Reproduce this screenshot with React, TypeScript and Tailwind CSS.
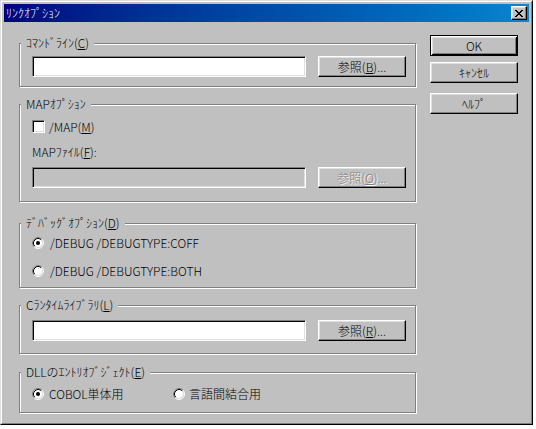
import type { ReactNode } from "react";

const raised =
  "border border-t-white border-l-white border-r-black border-b-black shadow-[inset_-1px_-1px_#808080,inset_1px_1px_#dfdfdf]";
const sunken =
  "border border-t-[#808080] border-l-[#808080] border-r-white border-b-white shadow-[inset_1px_1px_#000,inset_-1px_-1px_#dfdfdf]";

function Radio({ checked }: { checked?: boolean }) {
  return (
    <svg width="12" height="12" viewBox="0 0 12 12" className="shrink-0">
      <circle cx="6" cy="6" r="4.5" fill="#fff" />
      <path d="M2.11 9.89 A5.5 5.5 0 0 1 9.89 2.11" fill="none" stroke="#808080" />
      <path d="M9.89 2.11 A5.5 5.5 0 0 1 2.11 9.89" fill="none" stroke="#fff" />
      <path d="M2.82 9.18 A4.5 4.5 0 0 1 9.18 2.82" fill="none" stroke="#000" />
      <path d="M9.18 2.82 A4.5 4.5 0 0 1 2.82 9.18" fill="none" stroke="#dfdfdf" />
      {checked && <circle cx="6" cy="6" r="2" fill="#000" />}
    </svg>
  );
}

function Button({
  children,
  primary,
  disabled,
}: {
  children: ReactNode;
  primary?: boolean;
  disabled?: boolean;
}) {
  const frame = primary
    ? "border border-black shadow-[inset_1px_1px_#fff,inset_-1px_-1px_#000,inset_2px_2px_#dfdfdf,inset_-2px_-2px_#808080]"
    : raised;
  return (
    <div
      className={`flex h-[21px] w-[88px] shrink-0 items-center justify-center ${frame} ${
        disabled ? "text-[#808080] [text-shadow:1px_1px_0_#fff]" : "text-black"
      }`}
    >
      {children}
    </div>
  );
}

function Group({ label, className, children }: { label: ReactNode; className: string; children: ReactNode }) {
  return (
    <div className={`relative border border-[#808080] pl-[12px] shadow-[inset_1px_1px_#fff,1px_1px_#fff] ${className}`}>
      <span className="absolute -top-[8px] left-[1px] bg-[#c0c0c0] px-[5px] leading-[14px]">{label}</span>
      {children}
    </div>
  );
}

function PathRow({ disabled, label }: { disabled?: boolean; label: ReactNode }) {
  return (
    <div className="flex items-center">
      <div className={`h-[21px] w-[274px] ${sunken} ${disabled ? "bg-[#c0c0c0]" : "bg-white"}`} />
      <div className="ml-[12px]">
        <Button disabled={disabled}>{label}</Button>
      </div>
    </div>
  );
}

const U = ({ children }: { children: ReactNode }) => <span className="underline underline-offset-1">{children}</span>;

export default function App() {
  return (
    <div className="h-[429px] w-[536px] bg-white font-['Noto_Sans_CJK_JP',sans-serif] text-[12px] leading-[14px] font-light text-black">
      <div className="h-[425px] w-[533px] border border-t-[#dfdfdf] border-l-[#dfdfdf] border-r-black border-b-black">
        <div className="flex h-full flex-col border border-t-white border-l-white border-r-[#808080] border-b-[#808080] bg-[#c0c0c0] p-[2px]">
          <div className="flex h-[18px] shrink-0 items-center justify-between bg-linear-to-r from-[#000080] to-[#1084d0] pl-[2px] pr-[2px]">
            <span className="text-white">ﾘﾝｸｵﾌﾟｼｮﾝ</span>
            <div className={`flex h-[14px] w-[16px] items-center justify-center bg-[#c0c0c0] ${raised}`}>
              <svg width="8" height="7" viewBox="0 0 8 7" shapeRendering="crispEdges">
                <path
                  d="M0 0h2v1H0zM6 0h2v1H6zM1 1h2v1H1zM5 1h2v1H5zM2 2h4v1H2zM3 3h2v1H3zM2 4h4v1H2zM1 5h2v1H1zM5 5h2v1H5zM0 6h2v1H0zM6 6h2v1H6z"
                  fill="#000"
                />
              </svg>
            </div>
          </div>

          <div className="flex pl-[15px]">
            <div className="flex w-[397px] flex-col pt-[21px]">
              <Group label={<>ｺﾏﾝﾄﾞﾗｲﾝ(<U>C</U>)</>} className="pt-[12px] pb-[9px]">
                <PathRow label={<>参照(<U>B</U>)...</>} />
              </Group>

              <Group label="MAPｵﾌﾟｼｮﾝ" className="mt-[17px] pt-[15px] pb-[13px]">
                <div className="flex h-[13px] items-center">
                  <div className={`h-[13px] w-[13px] bg-white ${sunken}`} />
                  <span className="ml-[4px]">
                    /MAP(<U>M</U>)
                  </span>
                </div>
                <div className="mt-[12px] h-[14px]">
                  MAPﾌｧｲﾙ(<U>F</U>):
                </div>
                <div className="mt-[8px]">
                  <PathRow disabled label={<>参照(<U>O</U>)...</>} />
                </div>
              </Group>

              <Group label={<>ﾃﾞﾊﾞｯｸﾞｵﾌﾟｼｮﾝ(<U>D</U>)</>} className="mt-[21px] pt-[12px] pb-[9px]">
                <div className="flex h-[14px] items-center">
                  <Radio checked />
                  <span className="ml-[6px]">/DEBUG /DEBUGTYPE:COFF</span>
                </div>
                <div className="mt-[14px] flex h-[14px] items-center">
                  <Radio />
                  <span className="ml-[6px]">/DEBUG /DEBUGTYPE:BOTH</span>
                </div>
              </Group>

              <Group label={<>Cﾗﾝﾀｲﾑﾗｲﾌﾞﾗﾘ(<U>L</U>)</>} className="mt-[17px] pt-[14px] pb-[12px]">
                <PathRow label={<>参照(<U>R</U>)...</>} />
              </Group>

              <Group label={<>DLLのｴﾝﾄﾘｵﾌﾞｼﾞｪｸﾄ(<U>E</U>)</>} className="mt-[18px] pt-[14px] pb-[11px]">
                <div className="flex h-[14px] items-center">
                  <div className="flex w-[141px] items-center">
                    <Radio checked />
                    <span className="ml-[5px]">COBOL単体用</span>
                  </div>
                  <Radio />
                  <span className="ml-[4px]">言語間結合用</span>
                </div>
              </Group>
            </div>

            <div className="ml-[14px] flex flex-col pt-[13px]">
              <Button primary>OK</Button>
              <div className="mt-[6px]">
                <Button>ｷｬﾝｾﾙ</Button>
              </div>
              <div className="mt-[10px]">
                <Button>ﾍﾙﾌﾟ</Button>
              </div>
            </div>
          </div>
        </div>
      </div>
    </div>
  );
}
